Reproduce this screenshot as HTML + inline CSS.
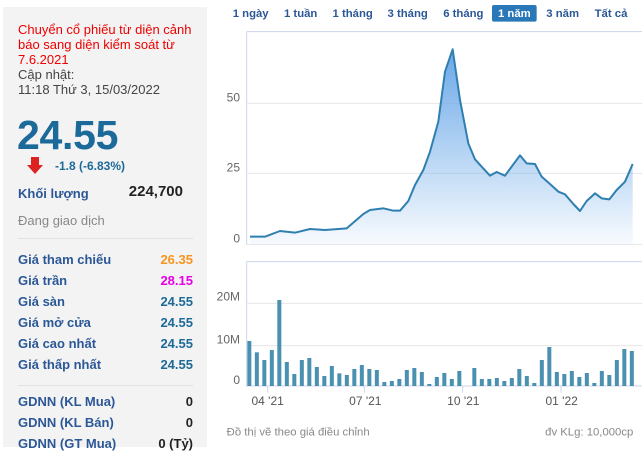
<!DOCTYPE html>
<html><head><meta charset="utf-8"><style>
body{margin:0;width:642px;height:440px;overflow:hidden;background:#fff;font-family:"Liberation Sans",Arial,sans-serif;position:relative}
.p{position:absolute;left:3px;top:7px;width:204px;height:440px;background:#f3f3f3}
.a{position:absolute;white-space:nowrap}
.red{color:#e00;font-size:13px;line-height:15px}
.g{color:#444;font-size:13px;line-height:15px}
.lb{left:18px;color:#2b5797;font-weight:bold;font-size:13px}
.v{right:449px;font-weight:bold;font-size:13px;color:#1d6a98}
.sep{position:absolute;left:18px;width:175px;height:1px;background:#e2e2e2}
</style></head><body>
<div class="p"></div>
<div class="a red" style="left:18px;top:22px">Chuyển cổ phiếu từ diện cảnh<br>báo sang diện kiểm soát từ<br>7.6.2021</div>
<div class="a g" style="left:18px;top:67px">Cập nhật:<br>11:18 Thứ 3, 15/03/2022</div>
<div class="a" style="left:17px;top:112px;font-size:41px;font-weight:bold;color:#1b6a9a;letter-spacing:-0.3px">24.55</div>
<svg class="a" style="left:27px;top:157px" width="16" height="18" viewBox="0 0 16 18"><rect x="4" y="0" width="8" height="8" fill="#d22"/><path d="M0 8H16L8 17Z" fill="#d22"/></svg>
<div class="a" style="left:55px;top:159px;font-size:12px;font-weight:bold;color:#1d6a98">-1.8 (-6.83%)</div>
<div class="a lb" style="top:186px">Khối lượng</div>
<div class="a" style="right:459px;top:183px;font-size:15px;font-weight:bold;color:#222">224,700</div>
<div class="a" style="left:18px;top:213px;font-size:13px;color:#888">Đang giao dịch</div>
<div class="sep" style="top:238px"></div>
<div class="a lb" style="top:252px">Giá tham chiếu</div><div class="a v" style="top:252px;color:#f7941d">26.35</div>
<div class="a lb" style="top:273px">Giá trần</div><div class="a v" style="top:273px;color:#e600e6">28.15</div>
<div class="a lb" style="top:294px">Giá sàn</div><div class="a v" style="top:294px">24.55</div>
<div class="a lb" style="top:315px">Giá mở cửa</div><div class="a v" style="top:315px">24.55</div>
<div class="a lb" style="top:336px">Giá cao nhất</div><div class="a v" style="top:336px">24.55</div>
<div class="a lb" style="top:357px">Giá thấp nhất</div><div class="a v" style="top:357px">24.55</div>
<div class="sep" style="top:385px"></div>
<div class="a lb" style="top:394px">GDNN (KL Mua)</div><div class="a v" style="top:394px;color:#222">0</div>
<div class="a lb" style="top:415px">GDNN (KL Bán)</div><div class="a v" style="top:415px;color:#222">0</div>
<div class="a lb" style="top:436px">GDNN (GT Mua)</div><div class="a v" style="top:436px;color:#222">0 (Tỷ)</div>

<svg class="a" style="left:210px;top:0" width="432" height="250" viewBox="0 0 1296 750" font-family="Liberation Sans,Arial,sans-serif">
<defs><linearGradient id="gr" x1="0" y1="0" x2="0" y2="1"><stop offset="0" stop-color="#6aa8e8"/><stop offset="1" stop-color="#6aa8e8" stop-opacity="0.05"/></linearGradient></defs>
<rect x="846" y="15" width="134" height="50" rx="6" fill="#2a78b8"/>
<g font-size="34" font-weight="bold" fill="#2b5797" text-anchor="middle">
<text x="122" y="51">1 ngày</text><text x="272" y="51">1 tuần</text><text x="428" y="51">1 tháng</text><text x="593" y="51">3 tháng</text><text x="760" y="51">6 tháng</text><text x="913" y="51" fill="#fff">1 năm</text><text x="1058" y="51">3 năm</text><text x="1203" y="51">Tất cả</text></g>
<path d="M110 95V735M110 95H1296" stroke="#ccd6eb" stroke-width="3" fill="none"/>
<path d="M110 310H1296M110 520H1296M110 733H1296" stroke="#e6e6e6" stroke-width="3"/>
<g font-size="36" fill="#666" text-anchor="end"><text x="90" y="305">50</text><text x="90" y="515">25</text><text x="90" y="727">0</text></g>
<path d="M120 710L165 710 210 693 255 698 300 687 345 690 410 685 460 642 480 630 520 625 550 632 570 632 595 603 615 555 640 510 660 455 685 365 705 215 728 148 750 300 775 430 795 478 815 500 840 527 860 516 885 527 930 466 950 490 975 492 995 530 1020 552 1045 575 1065 583 1090 612 1110 633 1130 603 1155 580 1175 595 1198 598 1220 570 1245 545 1268 492V733H120Z" fill="url(#gr)"/>
<path d="M120 710L165 710 210 693 255 698 300 687 345 690 410 685 460 642 480 630 520 625 550 632 570 632 595 603 615 555 640 510 660 455 685 365 705 215 728 148 750 300 775 430 795 478 815 500 840 527 860 516 885 527 930 466 950 490 975 492 995 530 1020 552 1045 575 1065 583 1090 612 1110 633 1130 603 1155 580 1175 595 1198 598 1220 570 1245 545 1268 492" fill="none" stroke="#2f7fb0" stroke-width="6" stroke-linejoin="round"/>
</svg>

<svg class="a" style="left:210px;top:250px" width="432" height="190" viewBox="0 0 1296 570" font-family="Liberation Sans,Arial,sans-serif">
<path d="M110 35V410M110 35H1296" stroke="#ccd6eb" stroke-width="3" fill="none"/>
<path d="M110 160H1296M110 287H1296" stroke="#e6e6e6" stroke-width="3"/>
<path d="M110 408H1296M173 408V428M463 408V428M758 408V428M1053 408V428" stroke="#ccd6eb" stroke-width="3"/>
<g font-size="36" fill="#666" text-anchor="end"><text x="90" y="152">20M</text><text x="90" y="280">10M</text><text x="90" y="402">0</text></g>
<g font-size="36" fill="#555" text-anchor="middle"><text x="173" y="465">04 '21</text><text x="466" y="465">07 '21</text><text x="760" y="465">10 '21</text><text x="1055" y="465">01 '22</text></g>
<g fill="#4a90b0" id="bars"></g>
<text x="50" y="556" font-size="34" fill="#888">Đồ thị vẽ theo giá điều chỉnh</text>
<text x="1270" y="556" font-size="34" fill="#888" text-anchor="end">đv KLg: 10,000cp</text>
</svg>
<script>
var t=[273,307,330,300,150,336,372,330,324,351,378,348,370,375,357,345,357,360,396,393,387,360,354,366,402,381,369,387,363,null,354,387,387,384,393,384,357,378,399,330,291,366,372,363,381,369,399,363,375,330,297,303];
var g=document.getElementById('bars'),s='';
t.forEach(function(v,i){if(v===null)return;var x=118+i*22.5;s+='<rect x="'+(x-6)+'" y="'+v+'" width="12" height="'+(408-v)+'"/>';});
g.innerHTML=s;
</script>
</body></html>
